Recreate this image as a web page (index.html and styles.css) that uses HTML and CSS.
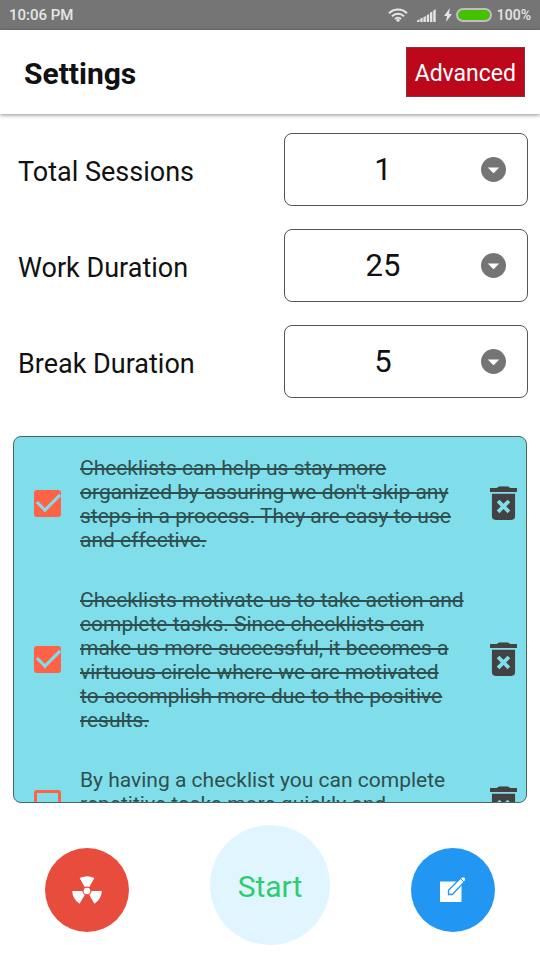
FILE: index.html
```html
<!DOCTYPE html>
<html lang="en">
<head>
<meta charset="utf-8">
<meta name="viewport" content="width=device-width, initial-scale=1">
<title>Settings</title>
<link rel="stylesheet" href="styles.css">
</head>
<body>
<svg class="sprite" aria-hidden="true">
  <symbol id="trash" viewBox="0 0 28 36">
    <path d="M7 2 9.500 0h9L21 2h7v4H0V2z"/>
    <path fill-rule="evenodd" d="M2 8h24v23q0 4-4 4H6q-4 0-4-4zM14 18.200 9.800 14 7 16.800 11.200 21 7 25.200 9.800 28 14 23.800 18.200 28 21 25.200 16.800 21 21 16.800 18.200 14z"/>
  </symbol>
</svg>
<div class="app">
  <div class="status">
    <span class="clock">10:06 PM</span>
    <div class="status-icons">
      <svg class="wifi" viewBox="0 0 20 14" aria-hidden="true">
        <g fill="none" stroke="currentColor" stroke-width="2"><path d="M1 5.200a13 13 0 0 1 18 0M4 8.200a8.500 8.500 0 0 1 12 0M7 11a4.300 4.300 0 0 1 6 0"/></g>
        <circle cx="10" cy="12.200" r="1.600" fill="currentColor"/>
      </svg>
      <svg class="signal" viewBox="0 0 19 13" aria-hidden="true">
        <path fill="currentColor" d="M0 13v-1.500l2.400-1.200V13zM3.200 13V9.800l2.400-1.200V13zM6.400 13V8.200L8.800 7v6zM9.700 13V6.200L12.100 5v8zM13 13V3.700l2.400-1.200V13zM16.300 13V1.500L18.700.3V13z"/>
      </svg>
      <svg class="bolt" viewBox="0 0 8 14" aria-hidden="true"><path fill="currentColor" d="M6 0 0 8h3l-1 6 6-8H5z"/></svg>
      <span class="battery"></span>
      <span>100%</span>
    </div>
  </div>
  <header class="header">
    <h1>Settings</h1>
    <button class="advanced" type="button">Advanced</button>
  </header>
  <main class="main">
    <form class="fields">
      <div class="field">
        <label for="sessions">Total Sessions</label>
        <div class="picker">
          <select id="sessions"><option>1</option><option>2</option><option>3</option></select>
          <svg viewBox="0 0 24 24" aria-hidden="true"><circle cx="12" cy="12" r="12"/><path d="M6.500 10h11L12 15.500z"/></svg>
        </div>
      </div>
      <div class="field">
        <label for="work">Work Duration</label>
        <div class="picker">
          <select id="work"><option>25</option><option>30</option><option>45</option></select>
          <svg viewBox="0 0 24 24" aria-hidden="true"><circle cx="12" cy="12" r="12"/><path d="M6.500 10h11L12 15.500z"/></svg>
        </div>
      </div>
      <div class="field">
        <label for="break">Break Duration</label>
        <div class="picker">
          <select id="break"><option>5</option><option>10</option><option>15</option></select>
          <svg viewBox="0 0 24 24" aria-hidden="true"><circle cx="12" cy="12" r="12"/><path d="M6.500 10h11L12 15.500z"/></svg>
        </div>
      </div>
    </form>
    <ul class="list">
      <li class="item">
        <input class="check" type="checkbox" id="task1" checked>
        <label class="text" for="task1">Checklists can help us stay more organized by assuring we don't skip any steps in a process. They are easy to use and effective.</label>
        <button class="delete" type="button" aria-label="Delete"><svg viewBox="0 0 28 36"><use href="#trash"/></svg></button>
      </li>
      <li class="item">
        <input class="check" type="checkbox" id="task2" checked>
        <label class="text" for="task2">Checklists motivate us to take action and complete tasks. Since checklists can make us more successful, it becomes a virtuous circle where we are motivated<br>to accomplish more due to the positive results.</label>
        <button class="delete" type="button" aria-label="Delete"><svg viewBox="0 0 28 36"><use href="#trash"/></svg></button>
      </li>
      <li class="item">
        <input class="check" type="checkbox" id="task3">
        <label class="text" for="task3">By having a checklist you can complete repetitive tasks more quickly and efficiently.</label>
        <button class="delete" type="button" aria-label="Delete"><svg viewBox="0 0 28 36"><use href="#trash"/></svg></button>
      </li>
    </ul>
  </main>
  <footer class="actions">
    <button class="round red" type="button" aria-label="Reset">
      <svg viewBox="-15 -16 30 30" aria-hidden="true">
        <g fill="#fff">
          <path id="blade" d="M-2.300-4-7.400-12.900Q0-16.600 7.400-12.900L2.300-4Q0-5.200-2.300-4z"/>
          <use href="#blade" transform="rotate(120)"/>
          <use href="#blade" transform="rotate(240)"/>
          <circle r="3.300"/>
        </g>
      </svg>
    </button>
    <button class="start" type="button">Start</button>
    <button class="round blue" type="button" aria-label="Edit">
      <svg viewBox="0 0 30 30" aria-hidden="true">
        <path fill="#fff" d="M2 6.500h21.500V27H2z"/>
        <path fill="#fff" stroke="#2196f3" stroke-width="1.300" d="M10.500 19.500v-4.300L23.500 2.200q2-1.500 3.600.1t.1 3.600L14.300 19.500z"/>
        <path fill="none" stroke="#2196f3" stroke-width="1" d="m22.500 3.500 3.700 3.700"/>
      </svg>
    </button>
  </footer>
</div>
</body>
</html>
```
FILE: styles.css
```css
* {
  box-sizing: border-box;
}

body {
  margin: 0;
  background: #fff;
  color: #111;
  font-family: Roboto, "Liberation Sans", sans-serif;
}

button,
select {
  font-family: inherit;
  margin: 0;
}

.sprite {
  position: absolute;
  width: 0;
  height: 0;
}

.app {
  display: flex;
  flex-direction: column;
  height: 100vh;
}

.status {
  display: flex;
  flex: none;
  align-items: center;
  justify-content: space-between;
  height: 30px;
  padding: 0 9px;
  background: #757575;
  color: #e6e6e6;
  font-size: 14px;
  font-weight: 500;
}

.clock {
  font-size: 15px;
}

.status-icons {
  display: flex;
  align-items: center;
}

.wifi {
  width: 20px;
  height: 14px;
  margin-right: 9px;
}

.signal {
  width: 19px;
  height: 13px;
  margin-right: 8px;
}

.bolt {
  width: 8px;
  height: 14px;
  margin-right: 4px;
}

.battery {
  width: 36px;
  height: 14px;
  margin-right: 5px;
  border: 2px solid #c4bcc4;
  border-radius: 7px;
  background: #45c100;
}

.header {
  display: flex;
  flex: none;
  align-items: center;
  justify-content: space-between;
  height: 84px;
  padding: 0 15px 0 24px;
  box-shadow: 0 1px 4px rgba(0, 0, 0, 0.45);
}

h1 {
  margin: 0;
  padding-top: 2px;
  font-size: 30px;
  font-weight: 700;
}

.advanced {
  height: 50px;
  padding: 2px 8px 0;
  border: 1px solid #84323c;
  background: #bd081c;
  color: #fff;
  font-size: 23px;
}

.main {
  display: flex;
  flex: 1;
  flex-direction: column;
  min-height: 0;
  padding: 19px 13px 0;
}

.fields {
  display: grid;
  gap: 23px;
  margin: 0 -1px 38px 5px;
}

.field {
  display: flex;
  align-items: center;
  justify-content: space-between;
  font-size: 27px;
}

.field label {
  padding-top: 4px;
}

.picker {
  position: relative;
  width: 244px;
}

.picker select {
  display: block;
  width: 100%;
  height: 73px;
  padding: 0 46px 0 0;
  border: 1px solid #555;
  border-radius: 8px;
  appearance: none;
  background: #fff;
  color: #111;
  font-size: 31px;
  text-align: center;
  text-align-last: center;
}

.picker svg {
  position: absolute;
  top: 24px;
  right: 22px;
  width: 25px;
  height: 25px;
  fill: #757575;
  pointer-events: none;
}

.picker path {
  fill: #fff;
}

.list {
  flex: 1;
  min-height: 0;
  margin: 0;
  padding: 0;
  overflow: hidden;
  border: 1px solid #48666a;
  border-radius: 8px;
  background: #80deea;
  list-style: none;
}

.item {
  display: flex;
  align-items: center;
  padding: 17px 9px 17px 20px;
}

.check {
  flex: none;
  width: 27px;
  height: 27px;
  margin: 0 19px 0 0;
  border: 3px solid #ff6347;
  border-radius: 3px;
  appearance: none;
}

.check:checked {
  background: #ff6347;
}

.check:checked::after {
  display: block;
  width: 20px;
  height: 10px;
  margin: 3px 0 0 1px;
  border: solid #80deea;
  border-width: 0 0 3px 3px;
  content: "";
  transform: translate(-1px, -3px) rotate(-45deg);
}

.text {
  flex: 1;
  padding: 2px 24px 0 0;
  color: #2f4f4f;
  font-size: 21px;
  line-height: 24px;
}

.check:checked + .text {
  text-decoration: line-through;
}

.delete {
  flex: none;
  padding: 0;
  border: 0;
  background: none;
}

.delete svg {
  display: block;
  width: 27px;
  height: 35px;
  fill: #424242;
}

.actions {
  display: flex;
  flex: none;
  align-items: center;
  justify-content: space-between;
  padding: 22px 45px 15px;
}

.round {
  display: grid;
  place-items: center;
  width: 84px;
  height: 84px;
  margin-top: 10px;
  padding: 0;
  border: 0;
  border-radius: 50%;
}

.round svg {
  width: 30px;
  height: 30px;
}

.red {
  background: #e74c3c;
}

.blue {
  background: #2196f3;
}

.start {
  width: 120px;
  height: 120px;
  padding: 2px 0 0;
  border: 0;
  border-radius: 50%;
  background: #e1f5fe;
  color: #2ecc71;
  font-size: 30px;
}
```
